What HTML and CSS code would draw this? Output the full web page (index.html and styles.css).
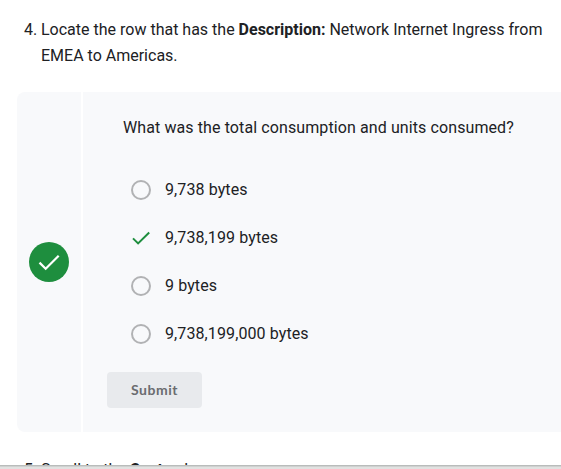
FILE: index.html
```html
<!DOCTYPE html>
<html lang="en">
<head>
<meta charset="utf-8">
<title>Lab quiz</title>
<link rel="stylesheet" href="styles.css">
</head>
<body>
<main class="lab">
  <div class="step"><span class="num">4.</span><p>Locate the row that has the <strong>Description:</strong> Network Internet Ingress from EMEA to Americas.</p></div>
  <section class="quiz">
    <div class="status">
      <svg class="badge" viewBox="0 0 40 40"><circle cx="20" cy="20" r="20" fill="#1e8e3e"/><path d="M10.5 20.6l6.2 6.2L29.7 13.7" fill="none" stroke="#fff" stroke-width="2.2"/></svg>
    </div>
    <form class="body">
      <p class="question">What was the total consumption and units consumed?</p>
      <div class="options">
        <label class="option"><span class="radio"></span>9,738 bytes</label>
        <label class="option"><svg class="tick" viewBox="0 0 20 20"><path d="M2 10.4l5.1 5L18.2 4.5" fill="none" stroke="#1e8e3e" stroke-width="2"/></svg>9,738,199 bytes</label>
        <label class="option"><span class="radio"></span>9 bytes</label>
        <label class="option"><span class="radio"></span>9,738,199,000 bytes</label>
      </div>
      <button class="submit" type="button" disabled>Submit</button>
    </form>
  </section>
  <div class="step next"><span class="num">5.</span><p>Scroll to the <strong>Cost</strong> column.</p></div>
</main>
<footer class="edge"></footer>
</body>
</html>
```
FILE: styles.css
```css
* { box-sizing: border-box; }
body {
  margin: 0;
  height: 469px;
  overflow: hidden;
  display: flex;
  flex-direction: column;
  background: #fff;
  color: #202124;
  font: 16px/26px Roboto, sans-serif;
}
p { margin: 0; }
.lab { height: 465px; overflow: hidden; padding: 17px 0 0 17px; }
.step { display: flex; padding-left: 7px; }
.num { width: 17px; flex: none; white-space: nowrap; }
.step p { width: 510px; }
.quiz {
  display: flex;
  gap: 2px;
  height: 340px;
  margin: 23px 0 25px;
  letter-spacing: .1px;
}
.status, .body { background: #f8f9fb; }
.status {
  width: 64px;
  display: flex;
  align-items: center;
  justify-content: center;
  border-radius: 8px 0 0 8px;
}
.badge { width: 40px; height: 40px; }
.body { flex: 1; padding: 23px 24px 24px; }
.question { padding-left: 16px; }
.options { margin-top: 25px; padding-left: 24px; }
.option { display: flex; align-items: center; gap: 14px; height: 48px; }
.radio {
  width: 20px;
  height: 20px;
  border: 2px solid #b1b2b4;
  border-radius: 50%;
}
.tick { width: 20px; height: 20px; }
.submit {
  display: block;
  width: 95px;
  height: 36px;
  margin-top: 14px;
  padding: 0;
  border: 0;
  border-radius: 4px;
  background: #e8eaed;
  color: #6a6c70;
  font: 700 14px/36px Lato, sans-serif;
  letter-spacing: .5px;
}
.edge {
  height: 4px;
  background: linear-gradient(#b9bcbb 0 1px, #cfd1d0 1px 2px, #e1e2e1 2px);
}
```
